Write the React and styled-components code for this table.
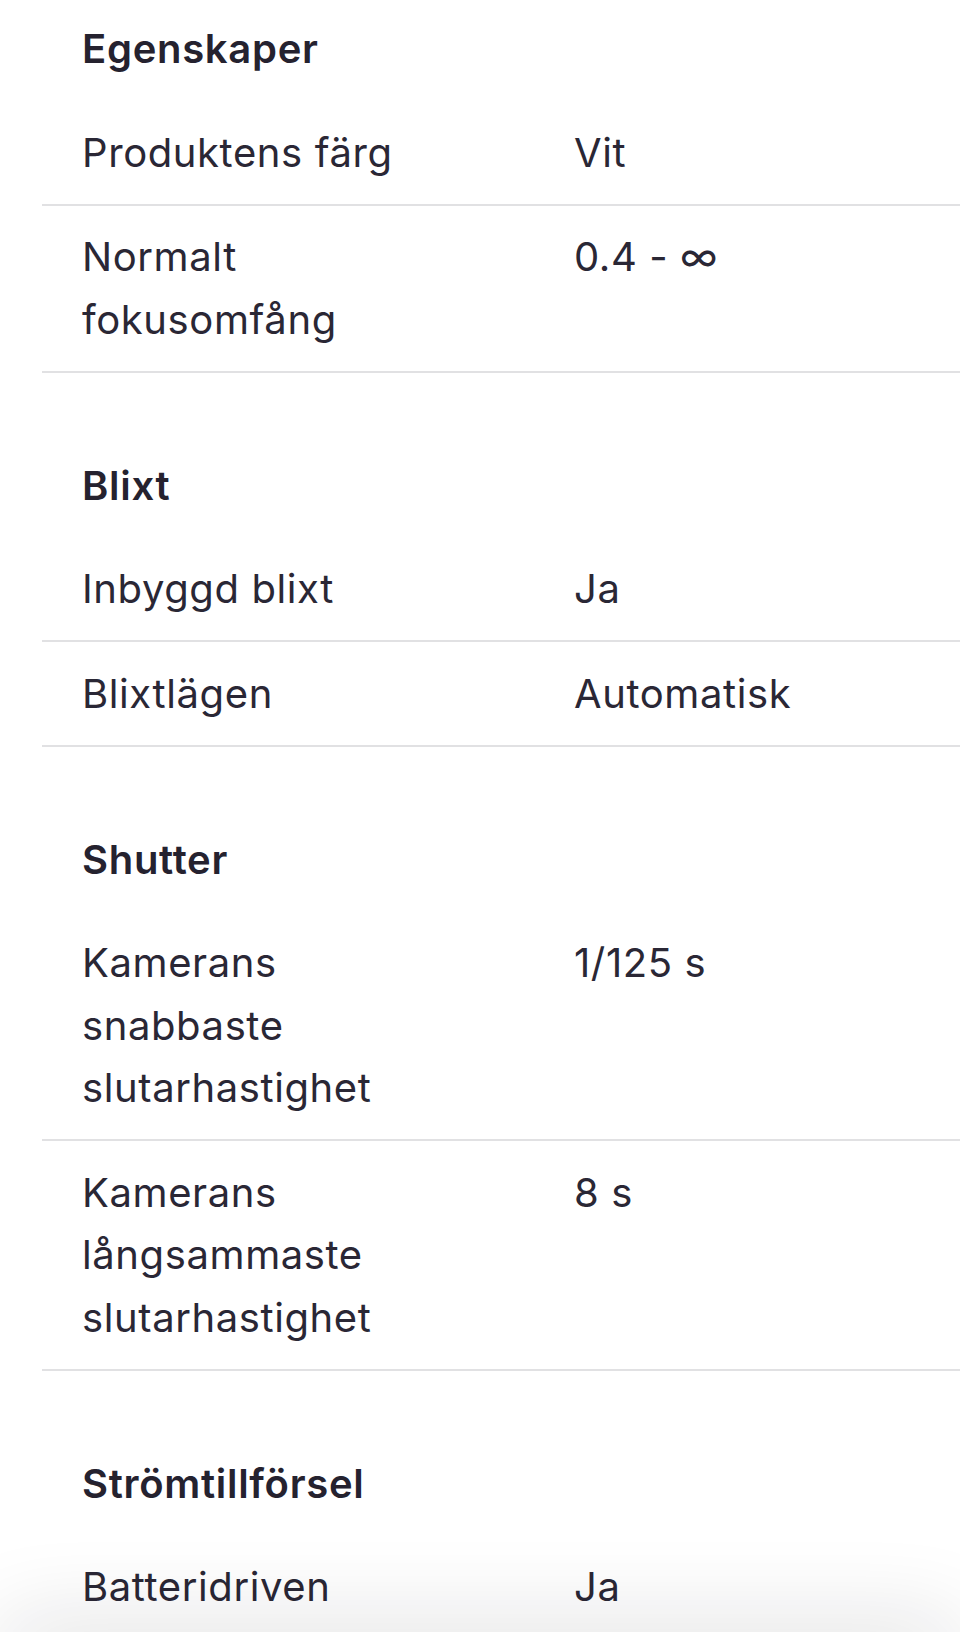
import React from "react";
import styled, { createGlobalStyle } from "styled-components";

const Global = createGlobalStyle`
  html, body { margin: 0; padding: 0; background: #ffffff; }
  body { font-family: Inter, "Noto Sans", "Liberation Sans", sans-serif; color: #2a2735; overflow-x: hidden; }
`;

const Page = styled.main`
  padding-top: 18px;
  padding-left: 42px;
`;

const Section = styled.section`
  & + & { margin-top: 82px; }
`;

const Heading = styled.h2`
  margin: 0 0 21px 40px;
  font-size: 40px;
  line-height: 62px;
  font-weight: 600;
  letter-spacing: 0.7px;
  color: #25222f;
`;

const Row = styled.div`
  display: grid;
  grid-template-columns: 492px 1fr;
  padding: 20.5px 0 19.5px 40px;
  border-bottom: 2px solid #e1e1e3;
  font-size: 40px;
  line-height: 62.5px;
  font-weight: 400;
  letter-spacing: 0.6px;
`;

const Label = styled.div`
  padding-right: 120px;
`;

const Value = styled.div``;

const BottomShade = styled.div`
  position: fixed;
  left: 0;
  right: 0;
  bottom: -60px;
  height: 60px;
  box-shadow: 0 -8px 90px rgba(20, 18, 30, 0.14);
  pointer-events: none;
`;

const data = [
  {
    title: "Egenskaper",
    rows: [
      ["Produktens färg", "Vit"],
      ["Normalt fokusomfång", "0.4 - ∞"],
    ],
  },
  {
    title: "Blixt",
    rows: [
      ["Inbyggd blixt", "Ja"],
      ["Blixtlägen", "Automatisk"],
    ],
  },
  {
    title: "Shutter",
    rows: [
      ["Kamerans snabbaste slutarhastighet", "1/125 s"],
      ["Kamerans långsammaste slutarhastighet", "8 s"],
    ],
  },
  {
    title: "Strömtillförsel",
    rows: [["Batteridriven", "Ja"]],
  },
];

export default function App() {
  return (
    <>
      <Global />
      <Page>
        {data.map((s) => (
          <Section key={s.title}>
            <Heading>{s.title}</Heading>
            {s.rows.map(([l, v]) => (
              <Row key={l}>
                <Label>{l}</Label>
                <Value>{v}</Value>
              </Row>
            ))}
          </Section>
        ))}
      </Page>
      <BottomShade />
    </>
  );
}
